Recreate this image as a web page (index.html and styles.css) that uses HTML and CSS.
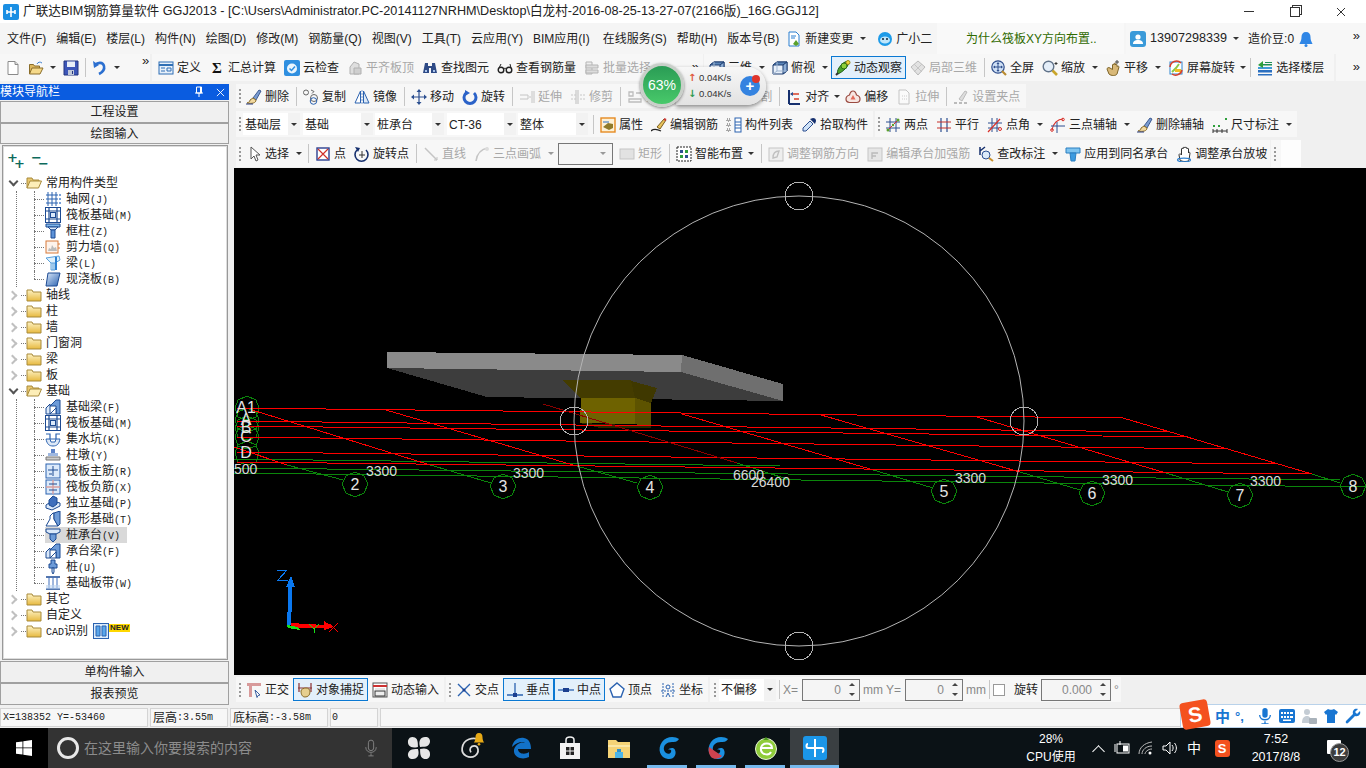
FILE: index.html
```html
<!DOCTYPE html>
<html lang="zh-CN">
<head>
<meta charset="utf-8">
<title>广联达BIM钢筋算量软件 GGJ2013</title>
<link rel="stylesheet" href="styles.css">
</head>
<body>
<svg class="defs" xmlns="http://www.w3.org/2000/svg">
<symbol id="app" viewBox="0 0 16 16"><rect width="16" height="16" rx="2" fill="#1a8fe3"/><path d="M8 3v10M4 8h8M4 6v4M12 6v4" stroke="#fff" stroke-width="1.600" fill="none"/></symbol>
<symbol id="doc2" viewBox="0 0 16 16"><path d="M3 1h7l3 3v11H3z" fill="#fff" stroke="#2b7fd0"/><path d="M5 5h5M5 7h4" stroke="#2b7fd0"/><path d="M7 13l3-4 3 4-3 2z" fill="#5aa02c"/></symbol>
<symbol id="bot" viewBox="0 0 16 16"><circle cx="8" cy="8" r="7" fill="#1e9be8"/><ellipse cx="8" cy="9" rx="5" ry="3.600" fill="#bfe6fb"/><circle cx="6" cy="8" r="1" fill="#123"/><circle cx="10" cy="8" r="1" fill="#123"/></symbol>
<symbol id="user" viewBox="0 0 16 16"><rect width="16" height="16" rx="3" fill="#3a9ad9"/><circle cx="8" cy="6" r="2.600" fill="#fff"/><path d="M3 13c0-3 2-4 5-4s5 1 5 4z" fill="#fff"/></symbol>
<symbol id="bell" viewBox="0 0 16 16"><path d="M8 1c-3 0-4.500 2-4.500 5 0 4-1.500 5-2 7h13c-.5-2-2-3-2-7 0-3-1.500-5-4.500-5z" fill="#2f86e6"/><circle cx="8" cy="14.500" r="1.500" fill="#2f86e6"/></symbol>
<symbol id="new" viewBox="0 0 16 16"><path d="M3 1.500h7l3 3v10H3z" fill="#fff" stroke="#8a8a8a"/><path d="M10 1.500v3h3" fill="#ddd" stroke="#8a8a8a"/></symbol>
<symbol id="open" viewBox="0 0 16 16"><path d="M1.500 14V4.500h4l1 1.500h5v2" fill="#dcb75f" stroke="#8a6d2a"/><path d="M1.500 14l2.500-6h11l-3 6z" fill="#f5d98a" stroke="#8a6d2a"/><path d="M9 4c1-2 3-2.500 5-1" fill="none" stroke="#3c7fd0"/></symbol>
<symbol id="save" viewBox="0 0 16 16"><path d="M1 1h14v14H1z" fill="#3c56b8" stroke="#23347f"/><path d="M4 1.500h8v5.500H4z" fill="#e8eef8"/><path d="M5 10h6v5H5z" fill="#c0c8d8"/><path d="M9 11h1v3H9z" fill="#23347f"/></symbol>
<symbol id="undo" viewBox="0 0 16 16"><path d="M3 5c3-3 8-3 9 1 .7 3-1 6-5 8" fill="none" stroke="#2b6fd0" stroke-width="2.600"/><path d="M1 1l1 7 5-3z" fill="#2b6fd0"/></symbol>
<symbol id="define" viewBox="0 0 16 16"><rect x="1" y="2" width="14" height="12" fill="#e7f0fa" stroke="#2f6fb5"/><path d="M1 5h14" stroke="#2f6fb5" stroke-width="2"/><path d="M3 8h4M3 11h4M9 8h4v3H9z" stroke="#2f6fb5" fill="none"/></symbol>
<symbol id="cloud" viewBox="0 0 16 16"><rect width="16" height="16" rx="2" fill="#2f8fe0"/><circle cx="8" cy="8.500" r="5" fill="#eaf5fd"/><path d="M5.500 8.500l2 2 3.500-4" stroke="#2f8fe0" stroke-width="1.500" fill="none"/></symbol>
<symbol id="gAlign" viewBox="0 0 16 16"><path d="M3 14V7l4-5 5 2v10z" fill="#dedede" stroke="#b0b0b0"/><path d="M7 8h7v6H7z" fill="#cfcfcf" stroke="#b0b0b0"/></symbol>
<symbol id="binoc" viewBox="0 0 16 16"><path d="M3 3h3v3h4V3h3l2 10H9V8H7v5H1z" fill="#2e4a86"/><path d="M3 10h2v2H3zM11 10h2v2h-2z" fill="#a9c3ea"/></symbol>
<symbol id="glass" viewBox="0 0 16 16"><circle cx="4" cy="10" r="2.800" fill="none" stroke="#222" stroke-width="1.400"/><circle cx="12" cy="10" r="2.800" fill="none" stroke="#222" stroke-width="1.400"/><path d="M6.500 9c1-1 2-1 3 0M2 8l2-4M14 8l-1-4" stroke="#222" fill="none"/></symbol>
<symbol id="gBatch" viewBox="0 0 16 16"><path d="M2 2h6v12H2z" fill="#eee" stroke="#b5b5b5"/><path d="M2 5h12v3H2zM2 10h12v3H2z" fill="#ddd" stroke="#b5b5b5"/></symbol>
<symbol id="cube" viewBox="0 0 16 16"><path d="M1 5l4-3h10v9l-4 3H1z" fill="#e8f0fa" stroke="#1f3f72"/><path d="M1 5l4-3h10l-4 3z" fill="#5c86b8" stroke="#1f3f72"/><path d="M11 5v9l4-3V2z" fill="#8fb0d8" stroke="#1f3f72"/><path d="M1 14l4-3h10M5 2v9" fill="none" stroke="#9fb5d0"/></symbol>
<symbol id="orbit" viewBox="0 0 16 16"><path d="M3 14C1 11 5 5 10 2c3-1 4 1 3 3-2 4-6 7-10 9z" fill="#4ca32d" stroke="#1d5e16"/><circle cx="9" cy="6" r="3" fill="#8fd03a" stroke="#2d6e16"/><circle cx="13" cy="2.500" r="2" fill="#f2d43c" stroke="#9b8a15"/><path d="M3 13l-2 2" stroke="#333" stroke-width="2"/></symbol>
<symbol id="g3d" viewBox="0 0 16 16"><path d="M8 1l7 6-7 8-7-8z" fill="#e2e2e2" stroke="#bbb"/><path d="M4 4l8 8M12 4l-8 8" stroke="#c5c5c5"/></symbol>
<symbol id="full" viewBox="0 0 16 16"><circle cx="7" cy="7" r="6.200" fill="#cfe0f5" stroke="#2f4e8c" stroke-width="1.200"/><path d="M7 3v8M3 7h8" stroke="#2f4e8c"/><path d="M7 2L5.500 4h3zM7 12l-1.500-2h3zM2 7l2-1.500v3zM12 7l-2-1.500v3z" fill="#2f4e8c"/><path d="M11 11l4 4" stroke="#b98a2e" stroke-width="2.200"/></symbol>
<symbol id="zoom" viewBox="0 0 16 16"><circle cx="6.500" cy="6.500" r="5.300" fill="#e4eef9" stroke="#61738a" stroke-width="1.400"/><path d="M10.500 10.500l4.500 4.500" stroke="#c9a52b" stroke-width="2.600"/><path d="M14 2v3M12.500 3.500h3" stroke="#333"/></symbol>
<symbol id="hand" viewBox="0 0 16 16"><path d="M2 9l2 5c2 2 7 2 8 0l2-7c0-1-1-1-2-.5V5c0-1-1.500-1-1.500 0V4C10.500 3 9 3 9 4v1C9 4 7.500 4 7.500 5v4.500L5 8C3.500 7 2 8 2 9z" fill="#d8b878" stroke="#7d6428"/><path d="M12 0v4M10 2h4" stroke="#444"/></symbol>
<symbol id="rotscr" viewBox="0 0 16 16"><rect x="2" y="2" width="12" height="12" fill="#fff" stroke="#2f86d0"/><path d="M4 12l4-4 3-4" stroke="#8cc84b" stroke-width="2" fill="none"/><path d="M7 12h6v-3h-6z" fill="#f0c020"/><path d="M2 7a6.500 6.500 0 0 1 11-4" stroke="#d8402a" stroke-width="1.500" fill="none"/><path d="M14 10a6.500 6.500 0 0 1-10 4" stroke="#d8402a" stroke-width="1.500" fill="none"/></symbol>
<symbol id="floor" viewBox="0 0 16 16"><path d="M1 14h14v1.500H1zM1 10h14v2.500H1z" fill="#2a6fc0"/><path d="M1 7h14v2H1z" fill="#3e9cd8"/><path d="M5 4h10v1.500H3zM8 2h7v1H8z" fill="#1f8f55"/><path d="M1 5l5-4v7z" fill="#2e9f3c"/></symbol>
<symbol id="brush" viewBox="0 0 16 16"><path d="M7 9l6-8 2 1-5 9z" fill="#7a9cd0" stroke="#3d5a92"/><path d="M7 9l3 2c0 3-4 4-9 3 2-1 3-1 3-3z" fill="#f2d9a0" stroke="#8a6d2a"/><path d="M0 15h7" stroke="#2c3f80"/></symbol>
<symbol id="copy" viewBox="0 0 16 16"><circle cx="3" cy="3.500" r="2.500" fill="none" stroke="#666"/><circle cx="11" cy="9" r="3.500" fill="none" stroke="#666"/><circle cx="10.500" cy="12" r="3.300" fill="none" stroke="#2b62b0"/><path d="M8 1l3 1.500-2 2" fill="none" stroke="#666"/></symbol>
<symbol id="mirror" viewBox="0 0 16 16"><path d="M1 14L6.500 2v12z" fill="#fff" stroke="#2b62b0"/><path d="M15 14L9.500 2v12z" fill="#dce9f7" stroke="#2b62b0"/><path d="M8 1v14" stroke="#7a9cd0" stroke-dasharray="2 1"/></symbol>
<symbol id="move" viewBox="0 0 16 16"><path d="M8 2v12M2 8h12" stroke="#2c4f90" stroke-width="1.200"/><path d="M8 0l2.500 3h-5zM8 16l2.500-3h-5zM0 8l3 2.500v-5zM16 8l-3 2.500v-5z" fill="#2c4f90"/></symbol>
<symbol id="rotate" viewBox="0 0 16 16"><path d="M12 4a6 6 0 1 1-8 0" fill="none" stroke="#2b62c8" stroke-width="3"/><path d="M3 1l5 3-5 3z" fill="#2b62c8"/></symbol>
<symbol id="gExt" viewBox="0 0 16 16"><path d="M13 2v12M15 2v12" stroke="#c4c4c4"/><path d="M1 6h8v4H1" fill="none" stroke="#c4c4c4"/><path d="M10 8h2" stroke="#c4c4c4"/></symbol>
<symbol id="gTrim" viewBox="0 0 16 16"><path d="M6 1v14M8 1v14" stroke="#bdbdbd"/><path d="M1 6h5M1 10h5M10 6h5M10 10h5" stroke="#c8c8c8" stroke-dasharray="2 1"/></symbol>
<symbol id="gBrk" viewBox="0 0 16 16"><path d="M2 3h4v4H2zM2 10h12v3H2zM9 4h5" stroke="#bdbdbd" fill="none" stroke-width="1.300"/></symbol>
<symbol id="align" viewBox="0 0 16 16"><path d="M3 1v14M3 15h11" stroke="#16306e" stroke-width="2"/><path d="M5 5h8M8 10h5" stroke="#d8402a" stroke-width="1.400"/><path d="M4 5l3-2v4z" fill="#2c4f90"/></symbol>
<symbol id="offset" viewBox="0 0 16 16"><path d="M8 2c2 0 3 2 3.500 4 2 .5 3.500 2 3.500 4s-1.500 3.500-3.500 3.500h-7C2.500 13.500 1 12 1 10s1.500-3.500 3.500-4C5 4 6 2 8 2z" fill="#f7e6e2" stroke="#9a4a40" stroke-width="1.200"/><path d="M8 6l2.500 4.500h-5z" fill="#e26a5a"/></symbol>
<symbol id="gStr" viewBox="0 0 16 16"><path d="M3 1h7l3 3v11H3z" fill="#fafafa" stroke="#c4c4c4"/><path d="M6 7h5M6 10h5" stroke="#ccc" stroke-dasharray="1 1"/></symbol>
<symbol id="gGrip" viewBox="0 0 16 16"><path d="M6 10l6-8 2 1-5 9z" fill="#ddd" stroke="#bbb"/><path d="M1 14h3M6 14h3M11 14h3" stroke="#bbb" stroke-width="2"/></symbol>
<symbol id="prop" viewBox="0 0 16 16"><rect x="1" y="1" width="14" height="14" fill="#fdf1d6" stroke="#e58a22" stroke-width="1.400"/><path d="M3 10l5-4 5 1v4l-4 2z" fill="#8f7a2a"/><path d="M3 5h6" stroke="#2c6fc0"/></symbol>
<symbol id="rebar" viewBox="0 0 16 16"><path d="M0 14c3-3 6-2 10 0" fill="none" stroke="#222" stroke-width="1.300"/><path d="M6 10l7-8 2 1-6 9z" fill="#e8c25a" stroke="#7a5d20"/><path d="M13 2l2 1" stroke="#c33" stroke-width="2"/></symbol>
<symbol id="list" viewBox="0 0 16 16"><path d="M1 2h3v2H1zM1 7h3v2H1zM1 12h3v2H1z" fill="none" stroke="#555" stroke-dasharray="1 1"/><rect x="9" y="1" width="6" height="14" fill="#fff" stroke="#2b62b0"/><path d="M9 5h6M9 8h6M9 11h6" stroke="#2b62b0"/></symbol>
<symbol id="pick" viewBox="0 0 16 16"><path d="M2 11l7-7 3 3-7 7H2z" fill="#cfe2f7" stroke="#2c4f90"/><path d="M9 2l5 5 1-3c0-2-1-3-3-3z" fill="#16306e"/></symbol>
<symbol id="two" viewBox="0 0 16 16"><path d="M1 5h14M1 11h14M5 1v14M11 1v14" stroke="#2c4f90"/><path d="M2 14L14 2" stroke="#d8302a"/><circle cx="3" cy="13" r="1.500" fill="#5aa02c"/><circle cx="13" cy="3" r="1.500" fill="#5aa02c"/><circle cx="8" cy="8" r="1.200" fill="#5aa02c"/></symbol>
<symbol id="par" viewBox="0 0 16 16"><path d="M5 1v14M11 1v14" stroke="#2c4f90" stroke-width="1.200"/><path d="M1 5h14M1 11h14" stroke="#c8302a" stroke-width="1.200"/></symbol>
<symbol id="ang" viewBox="0 0 16 16"><path d="M5 1v14M10 1v14M1 6h14M1 11h11" stroke="#2c4f90"/><path d="M1 15L13 2" stroke="#d8302a" stroke-width="1.200"/><circle cx="13" cy="12" r="1.500" fill="none" stroke="#d8302a"/></symbol>
<symbol id="arc3" viewBox="0 0 16 16"><path d="M2 13C3 6 8 2 13 2" fill="none" stroke="#d8302a" stroke-width="1.200"/><path d="M1 9h14M7 5v11" stroke="#2c4f90"/><circle cx="13" cy="2.500" r="1.300" fill="none" stroke="#d8302a"/><circle cx="2" cy="13" r="1.300" fill="none" stroke="#d8302a"/></symbol>
<symbol id="dim" viewBox="0 0 16 16"><path d="M1 12v4M15 12v4M1 14h14M5 12v4M10 12v4" stroke="#333"/><path d="M1 8h2v2H1zM13 1h2v2h-2zM6 8h2v2H6z" fill="#2e9f3c"/></symbol>
<symbol id="cur" viewBox="0 0 16 16"><path d="M5 1v12l3-3 2 5 2-1-2-5h4z" fill="#fff" stroke="#555"/></symbol>
<symbol id="pt" viewBox="0 0 16 16"><rect x="2" y="2" width="12" height="12" fill="#fff" stroke="#2c3f90" stroke-width="1.400"/><path d="M3 3l10 10M13 3L3 13" stroke="#d0302a" stroke-width="1.200"/></symbol>
<symbol id="rotpt" viewBox="0 0 16 16"><path d="M12 4a6.500 6.500 0 1 1-9 0" fill="none" stroke="#16306e" stroke-width="1.600"/><path d="M1 1l5 1-2 4z" fill="#16306e"/><path d="M8 5v7M5 9h6" stroke="#333"/></symbol>
<symbol id="gLine" viewBox="0 0 16 16"><path d="M2 2l12 12" stroke="#c5c5c5" stroke-width="1.500"/><path d="M11 14h3v-3" stroke="#c5c5c5" fill="none"/></symbol>
<symbol id="gArc" viewBox="0 0 16 16"><path d="M2 15C3 8 7 3 14 2" stroke="#c5c5c5" stroke-width="1.500" fill="none"/><circle cx="13" cy="3" r="2" fill="#ddd"/></symbol>
<symbol id="gRect" viewBox="0 0 16 16"><rect x="1" y="3" width="14" height="10" fill="#e2e2e2" stroke="#c5c5c5"/></symbol>
<symbol id="smart" viewBox="0 0 16 16"><rect x="1" y="1" width="14" height="14" fill="#fff" stroke="#222" stroke-dasharray="2 1"/><path d="M4 4h3v3H4zM9 9h3v3H9z" fill="#2c4f90"/><path d="M9 4h3v3H9zM4 9h3v3H4z" fill="#2e9f3c"/></symbol>
<symbol id="gAdj" viewBox="0 0 16 16"><rect x="1" y="2" width="14" height="13" fill="#eee" stroke="#c5c5c5"/><path d="M5 12c0-5 3-7 6-7l-2 6z" fill="none" stroke="#c0c0c0" stroke-width="1.400"/></symbol>
<symbol id="gEdit" viewBox="0 0 16 16"><rect x="1" y="2" width="14" height="13" fill="#e6e6e6" stroke="#c5c5c5"/><path d="M5 13V7h6M5 10h4" stroke="#bbb" fill="none" stroke-width="1.400"/></symbol>
<symbol id="mark" viewBox="0 0 16 16"><path d="M2 1v8M2 5l5-4" stroke="#16306e" stroke-width="1.500"/><circle cx="8" cy="9" r="4" fill="#dcebfa" stroke="#2c4f90"/><path d="M11 12l4 3" stroke="#c9902b" stroke-width="2"/></symbol>
<symbol id="apply" viewBox="0 0 16 16"><path d="M1 2h14v5H1z" fill="#7ec4f0" stroke="#2b7fc0"/><path d="M5 7h6l-1 8H6z" fill="#3c9be0" stroke="#2b7fc0"/></symbol>
<symbol id="hand2" viewBox="0 0 16 16"><path d="M3 9l1 5c2 2 8 2 9 0l1-7c0-1-1.500-1-1.500 0V3c0-1-1.500-1-1.500 0V2C10.500 1 9 1 9 2v0C9 1 7 1 7 2v1C7 2 5.500 2 5.500 3v6C4 7 3 8 3 9z" fill="#fff" stroke="#333"/><ellipse cx="8" cy="14" rx="6.500" ry="1.800" fill="none" stroke="#2b7fd0" stroke-width="1.200"/></symbol>
<symbol id="ortho" viewBox="0 0 16 16"><path d="M3 1h3v14H3z" fill="#d89a9a"/><path d="M1 1h14v3H1z" fill="#d89a9a"/><path d="M9 8l5 5-2 .5-1 2z" fill="#fff" stroke="#3a5fa0"/></symbol>
<symbol id="snap" viewBox="0 0 16 16"><path d="M2 1v9M14 1v9M1 6h14" stroke="#8a3030" stroke-width="1.200"/><path d="M4 9c0-2 3-3 5-3s4 1 4 4c0 3-2 5-5 5s-4-3-4-6z" fill="#e6cf8f" stroke="#8a6d2a"/></symbol>
<symbol id="dyn" viewBox="0 0 16 16"><rect x="1" y="1" width="14" height="14" fill="#fff" stroke="#555"/><path d="M1 4h14" stroke="#c33" stroke-width="2"/><path d="M3 7h10" stroke="#ccc"/><rect x="3" y="9" width="10" height="5" fill="#eee" stroke="#333"/></symbol>
<symbol id="cross" viewBox="0 0 16 16"><path d="M2 2l12 12M14 2L2 14" stroke="#2b62b0" stroke-width="1.400"/><circle cx="8" cy="8" r="1.500" fill="#1c3f90"/></symbol>
<symbol id="perp" viewBox="0 0 16 16"><path d="M8 1v12M0 13h16" stroke="#2b62b0" stroke-width="1.300"/><rect x="6" y="11" width="4" height="4" fill="#1c3f90"/></symbol>
<symbol id="mid" viewBox="0 0 16 16"><path d="M0 8h16" stroke="#2b62b0" stroke-width="1.300"/><rect x="5" y="6" width="6" height="4" fill="#1c3f90"/></symbol>
<symbol id="vert" viewBox="0 0 16 16"><path d="M8 1l7 6-3 8H4L1 7z" fill="#fff" stroke="#2b62b0" stroke-width="1.400"/></symbol>
<symbol id="coord" viewBox="0 0 16 16"><path d="M3 1v14M13 1v14M1 9h14" stroke="#2b62b0" stroke-dasharray="2 1"/><circle cx="8" cy="5" r="2" fill="none" stroke="#2b62b0"/><path d="M6 15l2-4 2 4" stroke="#2b62b0" fill="none"/></symbol>
<symbol id="fOpen" viewBox="0 0 16 16"><path d="M1 13V3h5l1 2h6v2" fill="#e8c76e" stroke="#a88a3a"/><path d="M1 13l3-7h11.500l-3 7z" fill="#fdeeb8" stroke="#a88a3a"/></symbol>
<symbol id="fClosed" viewBox="0 0 16 16"><path d="M1 14V3h5l1 2h8v9z" fill="url(#fg)" stroke="#a88a3a"/></symbol>
<linearGradient id="fg" x1="0" y1="0" x2="0" y2="1"><stop offset="0" stop-color="#fdf2c4"/><stop offset="1" stop-color="#e7b93f"/></linearGradient>
<linearGradient id="sl" x1="0" y1="0" x2="1" y2="1"><stop offset="0" stop-color="#dbe9fa"/><stop offset="1" stop-color="#2b62b0"/></linearGradient>
<symbol id="tGrid" viewBox="0 0 16 16"><path d="M3 1v14M7 1v14M11 1v14M1 4h12M1 8h12M1 12h12" stroke="#2b62b0"/><path d="M14 3h2v2h-2zM14 7h2v2h-2zM14 11h2v2h-2z" fill="#7aa2d8"/></symbol>
<symbol id="tRaft" viewBox="0 0 16 16"><rect x=".500" y=".500" width="15" height="15" fill="#fff" stroke="#1c4a92"/><path d="M1 4h14M1 12h14M4 1v14M12 1v14" stroke="#1c4a92" stroke-width="1.200"/><rect x="5.500" y="5.500" width="5" height="5" fill="#dbe9fa" stroke="#1c4a92"/></symbol>
<symbol id="tCol" viewBox="0 0 16 16"><path d="M1 1h14v3H1z" fill="#7eb6ea" stroke="#1c4a92"/><path d="M3 4h10L10 7H6z" fill="#dbe9fa" stroke="#1c4a92"/><path d="M6 7h4v8H6z" fill="#5c92d8" stroke="#1c4a92"/></symbol>
<symbol id="tWall" viewBox="0 0 16 16"><rect x="1" y="2" width="12" height="12" fill="#fdf3ec" stroke="#d87a3a"/><path d="M3 12l1-3 2 1 1-4 2 3 2-1 1 4z" fill="#bbb"/><path d="M13 5h2M13 9h2" stroke="#d87a3a"/></symbol>
<symbol id="tBeam" viewBox="0 0 16 16"><path d="M1 3l13-2 1 4-5 3v7H6V8z" fill="#dff0fb" stroke="#5aa0dc"/><path d="M6 8h4M8 8v7" stroke="#5aa0dc"/><path d="M11 2v13" stroke="#2b7fd0" stroke-width="2"/></symbol>
<symbol id="tSlab" viewBox="0 0 16 16"><path d="M3 2h12l-3 13H1z" fill="url(#sl)" stroke="#1c4a92"/></symbol>
<symbol id="tFB" viewBox="0 0 16 16"><path d="M1 15V9l4-4v10z" fill="#dbe9fa" stroke="#1c4a92"/><path d="M5 7l6-6h4v14h-4V7z" fill="#6d9bd8" stroke="#1c4a92"/><path d="M5 15h6V9z" fill="#fff" stroke="#1c4a92"/></symbol>
<symbol id="tSump" viewBox="0 0 16 16"><path d="M1 3h4v5h6V3h4" fill="none" stroke="#2b62b0" stroke-width="1.200"/><path d="M1 8c1 5 3 7 7 7s6-2 7-7l-4 0-1 3H6L5 8z" fill="#dde8f6" stroke="#2b62b0"/></symbol>
<symbol id="tPier" viewBox="0 0 16 16"><path d="M6 2h4v4H6z" fill="#5c82c8"/><path d="M3 6h10v3H3z" fill="#9fb8e0"/><path d="M1 10h14v3H1z" fill="#ccc" stroke="#777"/></symbol>
<symbol id="tMain" viewBox="0 0 16 16"><rect x="1" y="1" width="14" height="14" fill="#dceafa" stroke="#2b62b0"/><path d="M8 3v10M3 7h10M4 11h3" stroke="#1c4a92"/></symbol>
<symbol id="tNeg" viewBox="0 0 16 16"><rect x="1" y="1" width="14" height="14" fill="#dceafa" stroke="#2b62b0"/><path d="M1 8h14M8 1v14" stroke="#d8a0a0" stroke-width="1.500"/><path d="M4 5h8M4 11h8" stroke="#1c4a92"/></symbol>
<symbol id="tIso" viewBox="0 0 16 16"><path d="M1 10l6-4 8 2v3l-8 4-6-2z" fill="#dbe9fa" stroke="#1c4a92"/><path d="M4 5l4-4 4 2v6l-4 3-4-2z" fill="#3f6fbc" stroke="#1c4a92"/></symbol>
<symbol id="tStrip" viewBox="0 0 16 16"><path d="M1 15l4-7V5l3-3h1v6l4 7z" fill="#fff" stroke="#1c4a92"/><path d="M9 2l6-2v13l-2 2-4-7z" fill="#6d9bd8" stroke="#1c4a92"/></symbol>
<symbol id="tCap" viewBox="0 0 16 16"><path d="M1 2h14v3l-4 2H5L1 5z" fill="#dbe9fa" stroke="#1c4a92"/><path d="M5 7h6v5l-3 3-3-3z" fill="#6d9bd8" stroke="#1c4a92"/></symbol>
<symbol id="tPile" viewBox="0 0 16 16"><path d="M6 1h4v4h2v4H4V5h2z" fill="#6d9bd8" stroke="#1c4a92"/><path d="M7 9h2v4l-1 2-1-2z" fill="#dbe9fa" stroke="#1c4a92"/></symbol>
<symbol id="tBand" viewBox="0 0 16 16"><path d="M1 2h14M1 14h14" stroke="#1c4a92" stroke-width="1.400"/><path d="M4 2v12M8 2v12M12 2v12" stroke="#3f6fbc"/><path d="M1 10h14v4H1z" fill="#bcd4f0" opacity=".6"/></symbol>
<symbol id="tCad" viewBox="0 0 16 16"><rect x=".500" y=".500" width="15" height="15" fill="#dcecfb" stroke="#2b62b0"/><path d="M3 3h4v10H3zM9 3h4v10H9z" fill="#5aa6ea" stroke="#2b62b0"/></symbol>
<symbol id="pinI" viewBox="0 0 10 12"><path d="M2.500 1h5v6h-5zM1 7h8M5 7v4M6.500 1v6" fill="none" stroke="#fff"/></symbol>
<symbol id="xI" viewBox="0 0 10 10"><path d="M1 1l8 8M9 1l-8 8" stroke="currentColor" fill="none"/></symbol>
<symbol id="win" viewBox="0 0 16 16"><path d="M0 2.300L6.500 1.400V7.500H0zM7.300 1.300L16 0v7.500H7.300zM0 8.300h6.500v6.300L0 13.700zM7.300 8.300H16V16L7.300 14.700z" fill="#fff"/></symbol>
<symbol id="fan" viewBox="0 0 22 22"><path d="M10 10C4 12 0 9 1 4c1-4 6-4 8-1 1 2 1 4 1 7zM12 10C10 4 13 0 18 1c4 1 4 6 1 8-2 1-4 1-7 1zM12 12c6-2 10 1 9 6-1 4-6 4-8 1-1-2-1-4-1-7zM10 12c2 6-1 10-6 9-4-1-4-6-1-8 2-1 4-1 7-1z" fill="#e6e6e6"/></symbol>
<symbol id="swirl" viewBox="0 0 22 22"><path d="M19 4C12 0 3 3 2 11c-1 7 7 10 12 7 4-3 3-9-1-9-3 0-5 3-3 6" fill="none" stroke="#ddd" stroke-width="1.600"/></symbol>
<symbol id="bellY" viewBox="0 0 16 16"><path d="M8 1C5 1 4 3 4 6c0 3-1 5-2 6h12c-1-1-2-3-2-6 0-3-1-5-4-5z" fill="#e7a916"/><circle cx="8" cy="14" r="1.500" fill="#e7a916"/></symbol>
<symbol id="edge" viewBox="0 0 24 24"><path d="M3 11C4 4 10 1 15 2c5 1 7 5 7 11H9c0 5 7 6 11 3v5c-6 3-14 1-15-5-.5-3 1-6 4-8 2-1.500 5-2 7-1-2-2-8-1-13 4z" fill="#1272c9"/></symbol>
<symbol id="store" viewBox="0 0 22 24"><path d="M1 7h20v16H1z" fill="#f2f2f2"/><path d="M7 7V4c0-4 8-4 8 0v3" fill="none" stroke="#f2f2f2" stroke-width="1.500"/><path d="M7 11h3.500v3.500H7zM11.500 11H15v3.500h-3.500zM7 15.500h3.500V19H7zM11.500 15.500H15V19h-3.500z" fill="#222"/></symbol>
<symbol id="expl" viewBox="0 0 24 22"><path d="M1 3h8l2 2h12v16H1z" fill="#f5d376"/><path d="M1 8h22v2H1z" fill="#fbe7a6"/><path d="M8 15h8v6H8z" fill="#4db5e8"/><path d="M10 12h4v3h-4z" fill="#2f8fc8"/></symbol>
<symbol id="gBlue" viewBox="0 0 24 24"><path d="M23 3c-4-3-13-3-17 3-5 7-2 16 6 17 6 1 9-5 7-9-1-3-6-2-7 0 2-1 4 0 3 2-1 3-6 2-7-2-1-5 3-8 8-8 3 0 5 0 7-3z" fill="#1a90e0"/></symbol>
<symbol id="gRed" viewBox="0 0 24 24"><path d="M23 3c-4-3-13-3-17 3-5 7-2 16 6 17 6 1 9-5 7-9-1-3-6-2-7 0 2-1 4 0 3 2-1 3-6 2-7-2-1-5 3-8 8-8 3 0 5 0 7-3z" fill="#1a90e0"/><path d="M4 11l13 9c-3 3-8 4-11 1-2-3-3-6-2-10z" fill="#d0424e"/></symbol>
<symbol id="ie" viewBox="0 0 24 24"><circle cx="12" cy="13" r="10.500" fill="#8fcc3a" stroke="#e9f6d5"/><path d="M6 12h12c0-6-10-6-11 0-1 7 8 8 10 4" fill="none" stroke="#fff" stroke-width="2"/><path d="M12 1l3 3h-6z" fill="#4c9a1c"/></symbol>
<symbol id="plug" viewBox="0 0 24 24"><rect width="24" height="24" rx="3" fill="#1b96e8"/><path d="M12 3v18M11 12H5c-2 0-2-4 0-4M13 12h6c2 0 2 4 0 4" fill="none" stroke="#fff" stroke-width="2"/></symbol>
<symbol id="batt" viewBox="0 0 16 16"><path d="M1 4v8" stroke="#fff"/><rect x="3" y="4" width="12" height="9" fill="none" stroke="#fff"/><rect x="9" y="5.500" width="5" height="6" fill="#fff"/><path d="M6 1v4" stroke="#fff"/></symbol>
<symbol id="wifi" viewBox="0 0 16 16"><path d="M1 14C1 8 6 3 14 2M4 14c0-4 4-8 10-8M7 14c0-2 3-5 7-5" fill="none" stroke="#bbb"/><circle cx="12" cy="13" r="1.500" fill="#fff"/></symbol>
<symbol id="vol" viewBox="0 0 16 16"><path d="M1 6h3l4-4v12l-4-4H1z" fill="none" stroke="#fff"/><path d="M10 5c1.500 2 1.500 4 0 6M12.500 3c2.500 3 2.500 7 0 10" fill="none" stroke="#fff"/></symbol>
<symbol id="micG" viewBox="0 0 16 20"><rect x="5" y="1" width="6" height="12" rx="3" fill="none" stroke="#888"/><path d="M2 9c0 8 12 8 12 0M8 16v3M5 19h6" fill="none" stroke="#888"/></symbol>
<symbol id="micB" viewBox="0 0 14 18"><rect x="4" y="0" width="6" height="11" rx="3" fill="#1976d2"/><path d="M1 8c0 7 12 7 12 0M7 15v3M3 18h8" fill="none" stroke="#1976d2" stroke-width="1.500"/></symbol>
<symbol id="kbd" viewBox="0 0 16 14"><rect width="16" height="14" rx="2" fill="#1976d2"/><path d="M2 3h2v2H2zM5 3h2v2H5zM8 3h2v2H8zM11 3h3v2h-3zM2 7h2v2H2zM5 7h2v2H5zM8 7h2v2H8zM11 7h3v2h-3zM4 10.500h8V12H4z" fill="#fff"/></symbol>
<symbol id="pers" viewBox="0 0 16 16"><circle cx="6" cy="4" r="3" fill="#c4ccd4"/><path d="M1 15c0-5 2-7 5-7s4 2 4 7z" fill="#c4ccd4"/><rect x="8" y="10" width="8" height="6" rx="1" fill="#a9b2ba"/></symbol>
<symbol id="shirt" viewBox="0 0 16 16"><path d="M5 1L1 4l2 3 1-1v9h8V6l1 1 2-3-4-3c-1 1-5 1-6 0z" fill="#1976d2"/></symbol>
<symbol id="wrench" viewBox="0 0 16 16"><path d="M15 3l-3 3-2-2 3-3c-3-1-6 1-5 5L1 13c-1 2 1 3 2 2l7-7c4 1 6-2 5-5z" fill="#1976d2"/></symbol>
</svg>

<header class="title">
  <svg class="i appicon"><use href="#app"/></svg>
  <span class="title-text">广联达BIM钢筋算量软件 GGJ2013 - [C:\Users\Administrator.PC-20141127NRHM\Desktop\白龙村-2016-08-25-13-27-07(2166版)_16G.GGJ12]</span>
  <div class="winbtns">
    <span class="wb"><span class="wmin"></span></span>
    <span class="wb"><span class="wmax"></span></span>
    <span class="wb"><svg class="wx"><use href="#xI"/></svg></span>
  </div>
</header>

<nav class="menu">
  <div class="menu-main">
    <span class="mi">文件(F)</span><span class="mi">编辑(E)</span><span class="mi">楼层(L)</span><span class="mi">构件(N)</span><span class="mi">绘图(D)</span><span class="mi">修改(M)</span><span class="mi">钢筋量(Q)</span><span class="mi">视图(V)</span><span class="mi">工具(T)</span><span class="mi">云应用(Y)</span><span class="mi mi-b">BIM应用(I)</span><span class="mi">在线服务(S)</span><span class="mi">帮助(H)</span><span class="mi">版本号(B)</span>
    <span class="it it-nb"><svg class="i"><use href="#doc2"/></svg>新建变更</span><span class="car"></span>
    <span class="it it-gx"><svg class="i"><use href="#bot"/></svg>广小二</span>
  </div>
  <div class="menu-tab">为什么筏板XY方向布置..</div>
  <div class="menu-user">
    <svg class="i"><use href="#user"/></svg><span class="phone">13907298339</span><span class="car"></span><span class="bean">造价豆:0</span><svg class="i bell"><use href="#bell"/></svg><span class="chev">»</span>
  </div>
</nav>

<div class="tb1">
  <div class="panel p-quick">
    <svg class="i"><use href="#new"/></svg>
    <svg class="i mq"><use href="#open"/></svg><span class="car"></span>
    <svg class="i"><use href="#save"/></svg><span class="sep sep-q"></span>
    <svg class="i"><use href="#undo"/></svg><span class="car"></span><span class="chev chev-q">»</span>
  </div>
  <div class="panel p-a">
    <span class="it"><svg class="i"><use href="#define"/></svg>定义</span>
    <span class="it"><span class="i sigma">Σ</span>汇总计算</span>
    <span class="it"><svg class="i"><use href="#cloud"/></svg>云检查</span>
    <span class="it dis"><svg class="i"><use href="#gAlign"/></svg>平齐板顶</span>
    <span class="it"><svg class="i"><use href="#binoc"/></svg>查找图元</span>
    <span class="it"><svg class="i"><use href="#glass"/></svg>查看钢筋量</span>
    <span class="it dis"><svg class="i"><use href="#gBatch"/></svg>批量选择</span>
    <span class="chev chev-a">»</span>
  </div>
  <div class="panel p-b">
    <span class="it"><svg class="i"><use href="#cube"/></svg>三维</span><span class="car"></span>
    <span class="it"><svg class="i"><use href="#cube"/></svg>俯视</span><span class="car"></span>
    <span class="it on"><svg class="i"><use href="#orbit"/></svg>动态观察</span>
    <span class="it dis"><svg class="i"><use href="#g3d"/></svg>局部三维</span><span class="sep"></span>
    <span class="it"><svg class="i"><use href="#full"/></svg>全屏</span>
    <span class="it"><svg class="i"><use href="#zoom"/></svg>缩放</span><span class="car"></span>
    <span class="it"><svg class="i"><use href="#hand"/></svg>平移</span><span class="car"></span>
    <span class="it"><svg class="i"><use href="#rotscr"/></svg>屏幕旋转</span><span class="car car-n"></span><span class="sep"></span>
    <span class="it"><svg class="i"><use href="#floor"/></svg>选择楼层</span>
  </div>
  <div class="panel p-end"><span class="chev">»</span></div>
</div>

<div class="main">
  <aside class="side">
    <div class="side-head"><span>模块导航栏</span><svg class="pin"><use href="#pinI"/></svg><svg class="xclose"><use href="#xI"/></svg></div>
    <button class="sbtn sb-1">工程设置</button>
    <button class="sbtn sb-2">绘图输入</button>
    <div class="tree">
      <div class="tree-tools">
        <span class="pm">+<b>+</b></span><span class="pm pm2">−<b>−</b></span>
      </div>
      <div class="row"><span class="ex open"></span><span class="dots"></span><svg class="i"><use href="#fOpen"/></svg><span class="lb">常用构件类型</span></div>
      <div class="kids">
        <div class="kid"><svg class="i"><use href="#tGrid"/></svg><span class="lb">轴网<span class="m">(J)</span></span></div>
        <div class="kid"><svg class="i"><use href="#tRaft"/></svg><span class="lb">筏板基础<span class="m">(M)</span></span></div>
        <div class="kid"><svg class="i"><use href="#tCol"/></svg><span class="lb">框柱<span class="m">(Z)</span></span></div>
        <div class="kid"><svg class="i"><use href="#tWall"/></svg><span class="lb">剪力墙<span class="m">(Q)</span></span></div>
        <div class="kid"><svg class="i"><use href="#tBeam"/></svg><span class="lb">梁<span class="m">(L)</span></span></div>
        <div class="kid"><svg class="i"><use href="#tSlab"/></svg><span class="lb">现浇板<span class="m">(B)</span></span></div>
      </div>
      <div class="row"><span class="ex"></span><span class="dots"></span><svg class="i"><use href="#fClosed"/></svg><span class="lb">轴线</span></div>
      <div class="row"><span class="ex"></span><span class="dots"></span><svg class="i"><use href="#fClosed"/></svg><span class="lb">柱</span></div>
      <div class="row"><span class="ex"></span><span class="dots"></span><svg class="i"><use href="#fClosed"/></svg><span class="lb">墙</span></div>
      <div class="row"><span class="ex"></span><span class="dots"></span><svg class="i"><use href="#fClosed"/></svg><span class="lb">门窗洞</span></div>
      <div class="row"><span class="ex"></span><span class="dots"></span><svg class="i"><use href="#fClosed"/></svg><span class="lb">梁</span></div>
      <div class="row"><span class="ex"></span><span class="dots"></span><svg class="i"><use href="#fClosed"/></svg><span class="lb">板</span></div>
      <div class="row"><span class="ex open"></span><span class="dots"></span><svg class="i"><use href="#fOpen"/></svg><span class="lb">基础</span></div>
      <div class="kids">
        <div class="kid"><svg class="i"><use href="#tFB"/></svg><span class="lb">基础梁<span class="m">(F)</span></span></div>
        <div class="kid"><svg class="i"><use href="#tRaft"/></svg><span class="lb">筏板基础<span class="m">(M)</span></span></div>
        <div class="kid"><svg class="i"><use href="#tSump"/></svg><span class="lb">集水坑<span class="m">(K)</span></span></div>
        <div class="kid"><svg class="i"><use href="#tPier"/></svg><span class="lb">柱墩<span class="m">(Y)</span></span></div>
        <div class="kid"><svg class="i"><use href="#tMain"/></svg><span class="lb">筏板主筋<span class="m">(R)</span></span></div>
        <div class="kid"><svg class="i"><use href="#tNeg"/></svg><span class="lb">筏板负筋<span class="m">(X)</span></span></div>
        <div class="kid"><svg class="i"><use href="#tIso"/></svg><span class="lb">独立基础<span class="m">(P)</span></span></div>
        <div class="kid"><svg class="i"><use href="#tStrip"/></svg><span class="lb">条形基础<span class="m">(T)</span></span></div>
        <div class="kid sel"><svg class="i"><use href="#tCap"/></svg><span class="lb">桩承台<span class="m">(V)</span></span></div>
        <div class="kid"><svg class="i"><use href="#tFB"/></svg><span class="lb">承台梁<span class="m">(F)</span></span></div>
        <div class="kid"><svg class="i"><use href="#tPile"/></svg><span class="lb">桩<span class="m">(U)</span></span></div>
        <div class="kid"><svg class="i"><use href="#tBand"/></svg><span class="lb">基础板带<span class="m">(W)</span></span></div>
      </div>
      <div class="row"><span class="ex"></span><span class="dots"></span><svg class="i"><use href="#fClosed"/></svg><span class="lb">其它</span></div>
      <div class="row"><span class="ex"></span><span class="dots"></span><svg class="i"><use href="#fClosed"/></svg><span class="lb">自定义</span></div>
      <div class="row"><span class="ex"></span><span class="dots"></span><svg class="i"><use href="#fClosed"/></svg><span class="lb"><span class="m">CAD</span>识别</span><svg class="i cadi"><use href="#tCad"/></svg><span class="newb">NEW</span></div>
    </div>
    <button class="sbtn">单构件输入</button>
    <button class="sbtn">报表预览</button>
  </aside>

  <section class="work">
    <div class="wrow r1">
      <div class="panel">
        <span class="grip"></span>
        <span class="it"><svg class="i"><use href="#brush"/></svg>删除</span><span class="sep"></span>
        <span class="it"><svg class="i"><use href="#copy"/></svg>复制</span>
        <span class="it"><svg class="i"><use href="#mirror"/></svg>镜像</span><span class="sep"></span>
        <span class="it"><svg class="i"><use href="#move"/></svg>移动</span>
        <span class="it"><svg class="i"><use href="#rotate"/></svg>旋转</span><span class="sep"></span>
        <span class="it dis"><svg class="i"><use href="#gExt"/></svg>延伸</span>
        <span class="it dis"><svg class="i"><use href="#gTrim"/></svg>修剪</span><span class="sep"></span>
        <span class="it dis"><svg class="i"><use href="#gBrk"/></svg>打断</span>
        <span class="it dis it-hid"><svg class="i"><use href="#gBrk"/></svg>合并</span>
        <span class="it dis"><svg class="i"><use href="#gBrk"/></svg>分割</span><span class="sep"></span>
        <span class="it"><svg class="i"><use href="#align"/></svg>对齐</span><span class="car car-n"></span>
        <span class="it"><svg class="i"><use href="#offset"/></svg>偏移</span>
        <span class="it dis"><svg class="i"><use href="#gStr"/></svg>拉伸</span><span class="sep"></span>
        <span class="it dis"><svg class="i"><use href="#gGrip"/></svg>设置夹点</span>
      </div>
    </div>
    <div class="wrow r2">
      <div class="panel">
        <span class="grip"></span>
        <div class="combo c1"><span class="cv">基础层</span><span class="ca"><span class="car car-0"></span></span></div>
        <div class="combo c2"><span class="cv">基础</span><span class="ca"><span class="car car-0"></span></span></div>
        <div class="combo c3"><span class="cv">桩承台</span><span class="ca"><span class="car car-0"></span></span></div>
        <div class="combo c4"><span class="cv">CT-36</span><span class="ca"><span class="car car-0"></span></span></div>
        <div class="combo c5"><span class="cv">整体</span><span class="ca"><span class="car car-0"></span></span></div>
        <span class="sep"></span>
        <span class="it"><svg class="i"><use href="#prop"/></svg>属性</span>
        <span class="it"><svg class="i"><use href="#rebar"/></svg>编辑钢筋</span>
        <span class="it"><svg class="i"><use href="#list"/></svg>构件列表</span>
        <span class="it"><svg class="i"><use href="#pick"/></svg>拾取构件</span>
      </div>
      <div class="panel p-r2b">
        <span class="grip"></span>
        <span class="it"><svg class="i"><use href="#two"/></svg>两点</span>
        <span class="it"><svg class="i"><use href="#par"/></svg>平行</span>
        <span class="it"><svg class="i"><use href="#ang"/></svg>点角</span><span class="car"></span>
        <span class="it"><svg class="i"><use href="#arc3"/></svg>三点辅轴</span><span class="car"></span>
        <span class="it"><svg class="i"><use href="#brush"/></svg>删除辅轴</span>
        <span class="it"><svg class="i"><use href="#dim"/></svg>尺寸标注</span><span class="car"></span>
      </div>
    </div>
    <div class="wrow r3">
      <div class="panel">
        <span class="grip"></span>
        <span class="it"><svg class="i"><use href="#cur"/></svg>选择</span><span class="car"></span><span class="sep"></span>
        <span class="it"><svg class="i"><use href="#pt"/></svg>点</span>
        <span class="it"><svg class="i"><use href="#rotpt"/></svg>旋转点</span><span class="sep"></span>
        <span class="it dis"><svg class="i"><use href="#gLine"/></svg>直线</span>
        <span class="it dis"><svg class="i"><use href="#gArc"/></svg>三点画弧</span><span class="car car-g"></span>
        <div class="boxcombo"><span class="car car-0 car-g"></span></div>
        <span class="it dis"><svg class="i"><use href="#gRect"/></svg>矩形</span><span class="sep"></span>
        <span class="it"><svg class="i"><use href="#smart"/></svg>智能布置</span><span class="car car-n"></span><span class="sep sep-w"></span>
        <span class="it dis"><svg class="i"><use href="#gAdj"/></svg>调整钢筋方向</span>
        <span class="it dis"><svg class="i"><use href="#gEdit"/></svg>编辑承台加强筋</span>
        <span class="it"><svg class="i"><use href="#mark"/></svg>查改标注</span><span class="car"></span>
        <span class="it"><svg class="i"><use href="#apply"/></svg>应用到同名承台</span>
        <span class="it"><svg class="i"><use href="#hand2"/></svg>调整承台放坡</span>
      </div>
      <div class="panel p-grip"><span class="grip"></span></div>
    </div>

    <div class="canvas">
      <svg class="cad" viewBox="234 168 1132 507" xmlns="http://www.w3.org/2000/svg" shape-rendering="crispEdges">
        <polygon points="387,368 681,372 783,401 487,397" fill="#3d3d3d"/>
        <polygon points="387,352 682,355 681,372 387,368" fill="#8a8a8a"/>
        <polygon points="682,355 783,384 783,401 681,372" fill="#6f6f6f"/>
        <polygon points="562,380 631,380 635,398 581,398" fill="#443c00"/>
        <polygon points="631,381 657,388 651,403 635,398" fill="#3f3800"/>
        <polygon points="581,398 635,398 635,424 580,423" fill="#6e6200"/>
        <polygon points="635,398 651,403 651,428 635,424" fill="#5d5300"/>
        <polygon points="580,423 651,426 651,428 600,428" fill="#2c2800"/>
        <g fill="none" stroke="#0b860b">
          <path d="M234 459L780 466M234 468L1340 480M234 473L1366 487"/>
          <path d="M287 465L343 480M427 464L491 483M573 465L637 483M737 463L790 480M870 469L933 488M1020 472L1080 490M1166 473L1228 492M1312 474L1340 483"/>
          <polygon points="355,472 364,476 368,484 364,493 355,497 346,493 342,484 346,476"/>
          <polygon points="503,474 512,478 516,486 512,495 503,499 494,495 490,486 494,478"/>
          <polygon points="650,475 659,479 663,487 659,496 650,500 641,496 637,487 641,479"/>
          <polygon points="944,479 953,483 957,491 953,500 944,504 935,500 931,491 935,483"/>
          <polygon points="1092,481 1101,485 1105,493 1101,502 1092,506 1083,502 1079,493 1083,485"/>
          <polygon points="1240,483 1249,487 1253,495 1249,504 1240,508 1231,504 1227,495 1231,487"/>
          <polygon points="1353,474 1362,478 1366,486 1362,495 1353,499 1344,495 1340,486 1344,478"/>
          <polygon points="247,396 256,400 259,408 256,417 247,420 238,417 235,408 238,400"/>
          <polygon points="247,408 256,412 259,420 256,429 247,432 238,429 235,420 238,412"/>
          <polygon points="247,416 256,420 259,428 256,437 247,440 238,437 235,428 238,420"/>
          <polygon points="247,425 256,429 259,437 256,446 247,449 238,446 235,437 238,429"/>
          <polygon points="247,441 256,445 259,453 256,462 247,465 238,462 235,453 238,445"/>
        </g>
        <g fill="none" stroke="#f00" stroke-width="1">
          <path d="M236 408L1123 418M236 421L1170 432M236 426L1188 437M236 437L1226 449M236 452L1278 464M236 462L1312 474"/>
          <path d="M234 447L287 465M252 410L427 464M386 410L573 465M682 414L870 469M821 415L1020 472M977 417L1166 473M1123 418L1312 474"/>
        </g>
        <path d="M543 404L737 463" fill="none" stroke="#8b0000"/>
        <g fill="none" stroke="#b4b4b4">
          <circle cx="799" cy="421" r="225" shape-rendering="auto"/>
          <circle cx="799" cy="196" r="14"/>
          <circle cx="799" cy="646" r="14"/>
          <circle cx="574" cy="421" r="14"/>
          <circle cx="1024" cy="421" r="14"/>
        </g>
        <g class="cad-t">
          <text x="366" y="476">3300</text><text x="513" y="478">3300</text><text x="733" y="480">6600</text><text x="751" y="487">26400</text><text x="955" y="483">3300</text><text x="1102" y="485">3300</text><text x="1250" y="486">3300</text><text x="234" y="474">500</text>
        </g>
        <g class="cad-n">
          <text x="355" y="490">2</text><text x="503" y="492">3</text><text x="650" y="493">4</text><text x="944" y="497">5</text><text x="1092" y="499">6</text><text x="1240" y="501">7</text><text x="1353" y="492">8</text>
          <text x="246" y="413">A1</text><text x="246" y="425">A</text><text x="246" y="433">B</text><text x="246" y="442">C</text><text x="246" y="458">D</text>
        </g>
        <g>
          <polygon points="291,576 286,587 295,587" fill="#0a78f0"/>
          <path d="M288 587h4v25h-1v13h-4v-13h1z" fill="#0a78f0"/>
          <path d="M291 623L324 625V621L334 627L324 630V628L292 628z" fill="#f00"/>
          <path d="M287 625L298 627L300 630L288 628z" fill="#18e018"/>
          <path d="M277 570h10l-9 10h10" fill="none" stroke="#0a78f0"/>
          <path d="M309 624l5 5 5-5M314 629v4" fill="none" stroke="#18e018"/>
          <path d="M329 632l9-9M330 624l8 8" fill="none" stroke="#f00"/>
        </g>
      </svg>
    </div>

    <div class="wrow rb">
      <div class="panel">
        <span class="grip"></span>
        <span class="it"><svg class="i"><use href="#ortho"/></svg>正交</span>
        <span class="it on"><svg class="i"><use href="#snap"/></svg>对象捕捉</span>
        <span class="it"><svg class="i"><use href="#dyn"/></svg>动态输入</span>
      </div>
      <div class="panel p-rb2">
        <span class="grip"></span>
        <span class="it"><svg class="i"><use href="#cross"/></svg>交点</span>
        <span class="it on"><svg class="i"><use href="#perp"/></svg>垂点</span>
        <span class="it on"><svg class="i"><use href="#mid"/></svg>中点</span>
        <span class="it"><svg class="i"><use href="#vert"/></svg>顶点</span>
        <span class="it"><svg class="i"><use href="#coord"/></svg>坐标</span>
      </div>
      <div class="panel p-rb3">
        <span class="grip"></span>
        <div class="combo c6"><span class="cv">不偏移</span><span class="ca"><span class="car car-0"></span></span></div>
        <span class="sep sep-0"></span>
        <span class="fl w16">X=</span>
        <div class="spin s58"><span>0</span><span class="arrows"><i class="up"></i><i class="dn"></i></span></div>
        <span class="fl">mm</span>
        <span class="fl w16">Y=</span>
        <div class="spin s58"><span>0</span><span class="arrows"><i class="up"></i><i class="dn"></i></span></div>
        <span class="fl">mm</span>
        <span class="sep sep-0"></span>
        <span class="chk"></span>
        <span class="rot">旋转</span>
        <div class="spin s70"><span>0.000</span><span class="arrows"><i class="up"></i><i class="dn"></i></span></div>
        <span class="fl">°</span>
      </div>
    </div>
  </section>
</div>

<footer class="status">
  <span class="cell c-xy">X=138352 Y=-53460</span>
  <span class="cell c-h">层高<span class="m">:3.55m</span></span>
  <span class="cell c-b">底标高<span class="m">:-3.58m</span></span>
  <span class="cell c-z">0</span>
  <span class="cell c-rest"></span>
</footer>

<div class="taskbar">
  <div class="start"><svg class="i"><use href="#win"/></svg></div>
  <div class="search"><span class="cortana"></span><span class="ph">在这里输入你要搜索的内容</span><svg class="micg"><use href="#micG"/></svg></div>
  <div class="tk tk-first"><svg class="ti"><use href="#fan"/></svg></div>
  <div class="tk"><svg class="ti"><use href="#swirl"/></svg><svg class="belly"><use href="#bellY"/></svg></div>
  <div class="tk"><svg class="ti"><use href="#edge"/></svg></div>
  <div class="tk"><svg class="ti"><use href="#store"/></svg></div>
  <div class="tk"><svg class="ti"><use href="#expl"/></svg></div>
  <div class="tk ul"><svg class="ti"><use href="#gBlue"/></svg></div>
  <div class="tk ul"><svg class="ti"><use href="#gRed"/></svg></div>
  <div class="tk ul"><svg class="ti"><use href="#ie"/></svg></div>
  <div class="tk ul act"><svg class="ti"><use href="#plug"/></svg></div>
  <div class="cpu"><span>28%</span><span>CPU使用</span></div>
  <div class="slot"><span class="chevup"></span></div>
  <div class="slot"><svg class="i"><use href="#batt"/></svg></div>
  <div class="slot"><svg class="i"><use href="#wifi"/></svg></div>
  <div class="slot"><svg class="i"><use href="#vol"/></svg></div>
  <div class="slot zh">中</div>
  <div class="slot s-sg"><span class="sg">S</span></div>
  <div class="clock"><span>7:52</span><span>2017/8/8</span></div>
  <div class="notif"><span class="nt"></span><span class="nb">12</span></div>
</div>

<div class="widget">
  <div class="pill">
    <div class="sp"><span class="ar up-a">↑</span>0.04K/s</div>
    <div class="sp"><span class="ar dn-a">↓</span>0.04K/s</div>
  </div>
  <div class="gauge">63%</div>
  <div class="plus">+</div>
  <div class="reddot"></div>
</div>

<div class="ime">
  <span class="ime-s">S</span>
  <span class="ime-z">中</span><span class="ime-p">°,</span>
  <svg class="ime-i"><use href="#micB"/></svg>
  <svg class="ime-i"><use href="#kbd"/></svg>
  <svg class="ime-i"><use href="#pers"/></svg>
  <svg class="ime-i"><use href="#shirt"/></svg>
  <svg class="ime-i"><use href="#wrench"/></svg>
</div>
</body>
</html>
```
FILE: styles.css
```css
*{box-sizing:border-box}
html,body{margin:0;padding:0}
body{width:1366px;height:768px;overflow:hidden;position:relative;display:flex;flex-direction:column;background:#f0f0f0;color:#222;font:12px/1 "Liberation Sans","Noto Sans CJK SC",sans-serif}
.defs{position:absolute;width:0;height:0}
.i{width:16px;height:16px;flex:none;display:block}
.m{font:10px/1 "Liberation Mono","Noto Sans CJK SC",monospace}

.title{height:23px;flex:none;background:#fff;display:flex;align-items:center;padding-left:3px}
.title-text{margin-left:4px;white-space:nowrap;font-size:12.650px;color:#222}
.winbtns{margin-left:auto;margin-right:2px;display:flex}
.wb{width:46px;height:23px;display:flex;align-items:center;justify-content:center;color:#333}
.wmin{width:10px;height:1px;background:#333}
.wmax{width:10px;height:10px;border:1px solid #333;box-shadow:2px -2px 0 -1px #fff,2px -2px 0 0 #333}
.wx{width:10px;height:10px}

.menu{height:31px;flex:none;display:flex;background:#f5f5f5}
.menu-main{display:flex;align-items:center;width:937px;padding-left:2px;flex:none}
.mi{padding:0 5px;white-space:nowrap}
.mi-b{padding-right:8px}
.it-nb{margin-left:-2px}
.it-gx{margin-left:4px}
.menu-tab{width:187px;flex:none;background:#f9f9f9;display:flex;align-items:center;padding-left:29px;color:#2f6a00;white-space:nowrap}
.menu-user{flex:1;margin-left:2px;background:#f7f7f7;display:flex;align-items:center;padding-left:4px;white-space:nowrap}
.phone{margin:0 3px 0 4px;font-size:12.600px}
.bean{margin-left:6px}
.bell{margin-left:4px}
.chev{font-size:13px;color:#222;margin-left:auto;margin-right:6px;line-height:1;align-self:flex-start;margin-top:6px}

.car{flex:none;width:0;height:0;border-left:3px solid transparent;border-right:3px solid transparent;border-top:3px solid #333;margin:0 3px;box-sizing:content-box}
.car-n{margin:0 1px}
.car-0{margin:0}
.car-g{border-top-color:#999}

.tb1{height:30px;flex:none;display:flex;align-items:flex-start}
.panel{background:#f7f7f7;display:flex;align-items:center;flex:none}
.tb1 .panel{height:27px}
.p-quick{width:150px;padding-left:5px}
.mq{margin-left:7px}
.p-quick .car{margin:0 7px 0 6px}
.sep-q{margin:0 6px !important}
.chev-q{margin:0 0 0 15px;align-self:flex-start}
.p-a{width:551px;margin-left:2px;padding-left:2px}
.chev-a{margin-right:4px}
.p-b{width:630px;margin-left:1px;padding-left:1px}
.p-end{flex:1;margin-left:2px}

.it{display:flex;align-items:center;gap:3px;padding:0 4px;white-space:nowrap;flex:none;height:100%}
.it.dis{color:#a8a8a8}
.it.on{background:#e3f0fb;outline:1px solid #0a78d2;outline-offset:-1px;height:23px}
.sigma{font:bold 15px/16px "Liberation Serif",serif;text-align:center;color:#111}
.sep{flex:none;width:1px;height:19px;background:#c6c6c6;margin:0 2px 0 3px}
.sep-w{margin-left:6px}
.sep-0{margin:0}
.grip{flex:none;width:2px;height:14px;margin:0 1px 0 3px;background:repeating-linear-gradient(to bottom,#999 0 2px,transparent 2px 4px)}

.main{height:624px;flex:none;display:flex}
.side{width:234px;flex:none;padding-right:5px;display:flex;flex-direction:column}
.side-head{height:16px;flex:none;background:#0a5ce0;color:#fff;display:flex;align-items:center;font-size:12px;line-height:1}
.pin{margin-left:auto;width:10px;height:12px;margin-right:12px;flex:none}
.xclose{margin-right:4px;width:9px;height:9px;flex:none;color:#fff}
.sbtn{height:22px;flex:none;margin:0;padding:0;font:12px/1 "Liberation Sans","Noto Sans CJK SC",sans-serif;color:#222;background:#f0f0f0;border:1px solid #a0a0a0;width:229px}
.sb-1{margin-top:1px}
.sb-2{height:21px}
.tree{height:515px;flex:none;margin:1px 1px 1px 2px;width:226px;background:#fff;border:1px solid #999;box-shadow:inset 0 0 0 1px #ddd;overflow:hidden}
.tree-tools{height:29px;display:flex;align-items:center;gap:8px;padding-left:4px}
.pm{position:relative;width:16px;height:16px;font:bold 13px/10px "DejaVu Sans",sans-serif;color:#0d6a5c}
.pm b{position:absolute;left:7px;top:6px;font-size:13px}
.row,.kid{height:16px;display:flex;align-items:center;position:relative}
.row{padding-left:6px}
.ex{width:8px;height:8px;flex:none;position:relative}
.ex::before{content:"";position:absolute;left:0;top:1px;width:5px;height:5px;border-right:2px solid #c0c0c0;border-top:2px solid #c0c0c0;transform:rotate(45deg)}
.ex.open::before{border-color:#555;left:1px;top:-1px;transform:rotate(135deg)}
.dots{width:5px;height:0;margin:0 0 0 4px;border-top:1px dotted #777;flex:none}
.lb{margin-left:4px;white-space:nowrap;font-size:12px}
.kids{margin-left:13px;border-left:1px dotted #777}
.kid{padding-left:28px}
.kid::before{content:"";position:absolute;left:17px;top:8px;width:10px;border-top:1px dotted #777}
.kid::after{content:"";position:absolute;left:17px;top:0;height:100%;border-left:1px dotted #777}
.kid:last-child::after{height:8px}
.kid .lb{margin-left:5px}
.sel .lb{background:#d9d9d9;height:16px;line-height:16px;padding-right:7px;margin-left:0;padding-left:5px}
.sel .i{background:#d9d9d9}
.cadi{margin-left:5px}
.newb{background:#ffd800;color:#222;font:bold 8px/8px "Liberation Sans",sans-serif;padding:0 1px;margin-top:-7px}

.work{flex:1;display:flex;flex-direction:column;min-width:0}
.wrow{display:flex;flex:none;padding-left:2px;align-items:flex-start}
.r1{height:26px}
.r1 .panel{height:24px;width:790px}
.r1 .it,.r2 .it{padding-top:1px}
.it-hid{width:51px}
.r2{height:29px;padding-top:1px}
.r2 .panel{height:26px}
.r2 .panel:first-child{width:637px}
.p-r2b{margin-left:2px;width:422px}
.r3{height:29px;padding-top:1px}
.r3 .panel{height:27px}
.r3 .panel:first-child{width:1034px}
.r3 .p-grip{margin-left:1px;width:30px;background:linear-gradient(to right,#f7f7f7 0 10px,#fdfdfd 10px)}

.combo{display:flex;height:22px;flex:none;margin-left:3px}
.cv{background:#fff;display:flex;align-items:center;padding-left:2px;height:22px;flex:1;padding-top:1px}
.ca{width:12px;background:#f2f2f2;display:flex;align-items:center;justify-content:center;flex:none;height:22px}
.c1{width:57px;margin-left:1px}
.c2{width:70px}
.c3{width:69px;margin-left:2px}
.c4{width:69px;margin-left:3px}
.c5{width:70px;margin-left:2px;margin-right:2px}
.c6{width:57px;margin-left:0}
.boxcombo{width:55px;height:22px;background:#f5f5f5;border:1px solid #777;display:flex;align-items:center;justify-content:flex-end;padding-right:6px;flex:none;margin:0 2px 0 1px}

.canvas{height:507px;flex:none;background:#000}
.cad{display:block;width:1132px;height:507px}
.cad-t text{font:14px "Liberation Sans",sans-serif;fill:#d8d8d8}
.cad-n text{font:16px "Liberation Sans",sans-serif;fill:#e4e4e4;text-anchor:middle}

.rb{height:33px;padding-top:2px}
.rb .panel{height:25px}
.rb .panel:first-child{width:208px}
.p-rb2{margin-left:2px;width:262px}
.p-rb3{margin-left:2px;width:411px;gap:3px}
.p-rb3 .grip{margin:0 0 0 4px}
.fl{color:#888;white-space:nowrap;flex:none}
.w16{width:16px}
.spin{height:22px;border:1px solid #777;background:#f5f5f5;display:flex;align-items:center;justify-content:flex-end;color:#888;flex:none}
.s58{width:58px}
.s70{width:70px}
.arrows{width:14px;display:flex;flex-direction:column;align-items:center;gap:7px;margin-left:4px}
.arrows i{width:0;height:0;border-left:3px solid transparent;border-right:3px solid transparent;box-sizing:content-box}
.arrows .up{border-bottom:3px solid #444}
.arrows .dn{border-top:3px solid #444}
.chk{width:12px;height:12px;border:1px solid #999;background:#fff;flex:none}
.rot{margin-left:6px;color:#222;white-space:nowrap;flex:none}

.status{height:20px;flex:none;display:flex;gap:2px;padding-bottom:1px}
.cell{height:19px;background:#f7f7f7;border:1px solid #d4d4d4;display:flex;align-items:center;padding-left:2px;flex:none;white-space:nowrap}
.c-xy{width:148px;font:10px/1 "Liberation Mono",monospace}
.c-h{width:78px}
.c-b{width:98px}
.c-z{width:48px;font:10px/1 "Liberation Mono",monospace;padding-left:1px}
.c-rest{flex:1}

.taskbar{height:40px;flex:none;background:#0b1216;display:flex;align-items:center;color:#fff}
.start{width:48px;height:40px;background:#000;display:flex;align-items:center;justify-content:center;flex:none}
.search{width:344px;height:40px;background:#333;display:flex;align-items:center;flex:none;padding-left:9px;margin-right:2px}
.cortana{width:22px;height:22px;border:3px solid #e8e8e8;border-radius:50%;flex:none}
.ph{font-size:14px;color:#8c8c8c;margin-left:5px;white-space:nowrap}
.micg{width:14px;height:20px;margin-left:112px;flex:none}
.tk{width:49px;height:40px;display:flex;align-items:center;justify-content:center;position:relative;flex:none}
.tk-first{margin-right:4px}
.ti{width:24px;height:24px;flex:none}
.belly{position:absolute;left:25px;top:4px;width:14px;height:14px}
.ul::after{content:"";position:absolute;left:4px;right:5px;bottom:0;height:3px;background:#76b9ed}
.act{background:#3a3f42}
.act::after{left:0;right:0}
.cpu{margin-left:auto;width:70px;display:flex;flex-direction:column;align-items:center;gap:6px;font-size:12px;flex:none}
.slot{width:24px;height:40px;display:flex;align-items:center;justify-content:center;flex:none}
.chevup{width:9px;height:9px;border-left:1px solid #fff;border-top:1px solid #fff;transform:rotate(45deg);margin-top:6px}
.zh{font-size:14px}
.s-sg{margin-left:4px}
.sg{width:15px;height:17px;background:#f4511e;border-radius:3px;color:#fff;font:bold 13px/17px "Liberation Sans",sans-serif;text-align:center}
.clock{margin-left:6px;width:72px;display:flex;flex-direction:column;align-items:center;gap:6px;flex:none;font-size:12.500px}
.notif{width:46px;height:40px;position:relative;flex:none;margin-right:8px}
.nt{position:absolute;left:15px;top:12px;width:14px;height:14px;background:#fff;border-radius:1px}
.nb{position:absolute;left:18px;top:15px;width:19px;height:19px;border-radius:50%;background:#3d3d3d;border:1px solid #999;font:bold 11px/17px "Liberation Sans",sans-serif;text-align:center;color:#fff}

.widget{position:absolute;left:640px;top:63px;width:128px;height:44px}
.pill{position:absolute;left:36px;top:4px;width:90px;height:38px;background:linear-gradient(#f7f7f7,#e2e2e2);border-radius:0 19px 19px 0;box-shadow:0 2px 4px rgba(0,0,0,.45);padding:6px 0 0 14px;display:flex;flex-direction:column;gap:6px}
.sp{font:9.500px/10px "Liberation Sans",sans-serif;color:#333;display:flex;align-items:center;gap:5px}
.ar{font:bold 10px/10px "DejaVu Sans",sans-serif;width:6px;margin-left:-2px}
.up-a{color:#e05a40}
.dn-a{color:#2f9a50}
.gauge{position:absolute;left:0;top:0;width:44px;height:44px;border-radius:50%;border:3px solid #c9cfc9;background:linear-gradient(#2a9c55,#48c96a);color:#fff;font:14px/38px "Liberation Sans",sans-serif;text-align:center;box-shadow:0 1px 3px rgba(0,0,0,.5)}
.plus{position:absolute;left:100px;top:13px;width:20px;height:20px;border-radius:50%;background:#3483e0;color:#fff;font:bold 15px/19px "Liberation Sans",sans-serif;text-align:center}
.reddot{position:absolute;left:112px;top:12px;width:8px;height:8px;border-radius:50%;background:#e0352b}

.ime{position:absolute;left:1180px;top:704px;width:186px;height:24px;background:#fff;border:1px solid #b9d2ea;border-right:0;display:flex;align-items:center}
.ime-s{position:absolute;left:0;top:-4px;width:28px;height:27px;border-radius:4px;background:#f4511e;color:#fff;font:bold 21px/27px "Liberation Sans",sans-serif;text-align:center;transform:rotate(-10deg)}
.ime-z{margin-left:34px;font-size:15px;font-weight:700;color:#1976d2}
.ime-p{margin-left:5px;width:16px;font:bold 13px/1 "Liberation Sans",sans-serif;color:#1976d2}
.ime-i{width:16px;height:16px;flex:none;margin-left:6px}
```
